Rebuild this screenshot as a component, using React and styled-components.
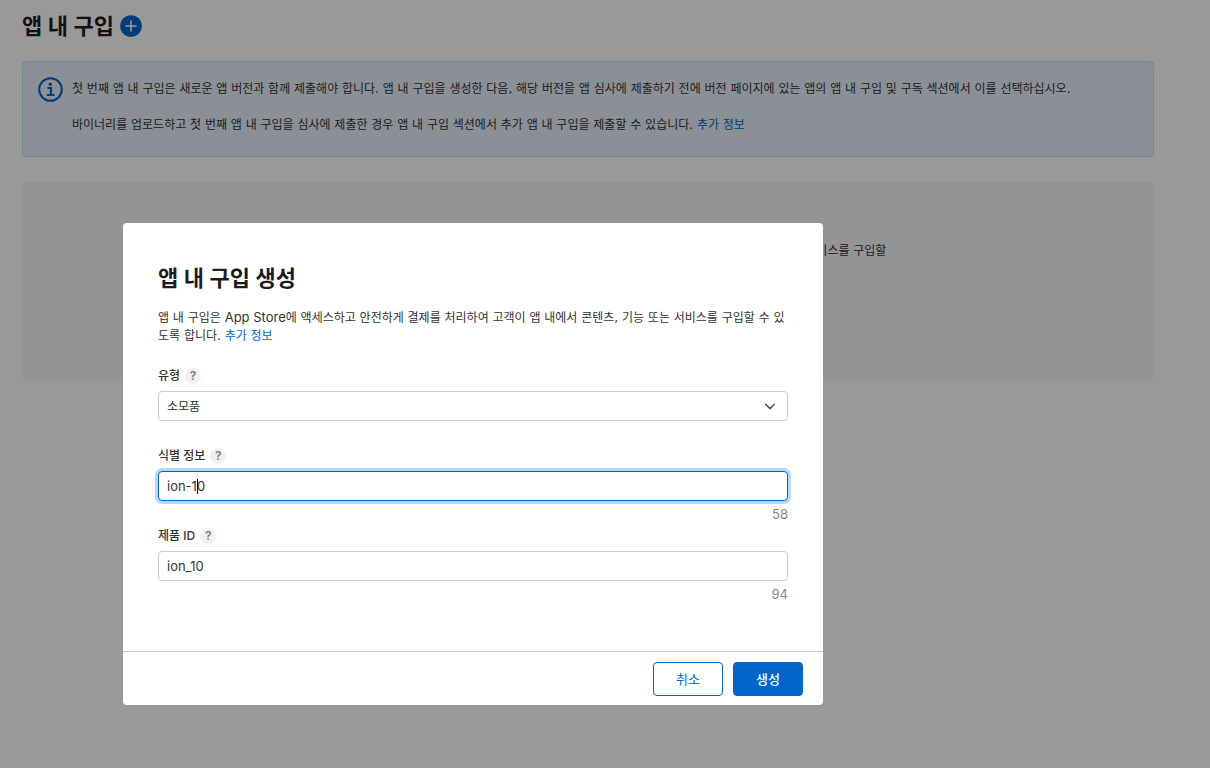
import { useState } from 'react';
import styled, { createGlobalStyle, css } from 'styled-components';

const latinFont = "Inter, 'Noto Sans CJK KR', sans-serif";
const koreanFont = "'DejaVu Sans', 'Noto Sans CJK KR', sans-serif";

const GlobalStyle = createGlobalStyle`
  * {
    box-sizing: border-box;
  }

  body {
    margin: 0;
    background: #fff;
    color: #333;
    font-family: ${latinFont};
    font-size: 12px;
    line-height: 18px;
  }

  h1, h2, p {
    margin: 0;
  }

  p {
    font-family: ${koreanFont};
  }

  button, input, select {
    font-family: inherit;
  }
`;

const Page = styled.main`
  min-height: 100vh;
  padding: 10px 56px 24px 22px;
`;

const PageHeader = styled.header`
  display: flex;
  align-items: center;
  gap: 6px;
  height: 32px;
  margin-bottom: 19px;
`;

const PageTitle = styled.h1`
  color: #1d1d1f;
  font-size: 22px;
  font-weight: 600;
  line-height: 32px;
`;

const AddButton = styled.button`
  display: flex;
  padding: 0;
  border: 0;
  background: none;
`;

const Notice = styled.section`
  display: flex;
  gap: 9px;
  padding: 18px 15px 22px;
  border: 1px solid #c2dfff;
  border-radius: 4px;
  background: #e8f0fb;

  svg {
    flex: none;
    margin-top: -3px;
  }
`;

const NoticeText = styled.div`
  display: grid;
  gap: 18px;
`;

const Link = styled.a`
  color: #0066cc;
  text-decoration: none;
`;

const Latin = styled.span`
  font-family: ${latinFont};
  font-size: 13px;
  line-height: 1;
`;

const EmptyPanel = styled.section`
  min-height: 199px;
  margin-top: 25px;
  padding: 60px 24px 24px;
  border-radius: 4px;
  background: #f7f7f7;
  text-align: center;
  word-break: keep-all;

  p {
    max-width: 604px;
    margin: 0 auto;
  }
`;

const Overlay = styled.div`
  position: fixed;
  inset: 0;
  padding: 223px 24px 24px 123px;
  background: rgba(0, 0, 0, 0.4);
  overflow: auto;
`;

const Modal = styled.form`
  max-width: 700px;
  border-radius: 4px;
  background: #fff;
`;

const ModalBody = styled.div`
  padding: 39px 35px 46px;
`;

const ModalTitle = styled.h2`
  color: #1d1d1f;
  font-size: 22px;
  font-weight: 600;
  line-height: 32px;
`;

const ModalText = styled.p`
  margin: 15px 0 21px;
  word-break: break-all;
`;

const FieldGroup = styled.div`
  min-height: 80px;

  &:last-child {
    min-height: 79px;
  }
`;

const LabelRow = styled.div`
  display: flex;
  align-items: center;
  gap: 5px;
  height: 20px;
  margin-bottom: 5px;
`;

const Label = styled.label`
  font-weight: 500;
`;

const HelpButton = styled.button`
  width: 16px;
  height: 16px;
  padding: 0;
  border: 0;
  border-radius: 50%;
  background: #f0f0f0;
  color: #777;
  font-size: 12px;
  font-weight: 600;
  line-height: 16px;
`;

const Control = styled.div`
  position: relative;

  svg {
    position: absolute;
    top: 12px;
    right: 12px;
    pointer-events: none;
  }
`;

const controlStyle = css`
  display: block;
  width: 100%;
  height: 30px;
  padding: 0 8px;
  border: 1px solid ${(props) => (props.$active ? '#0066cc' : '#ccc')};
  border-radius: 4px;
  outline: 0;
  background: #fff;
  box-shadow: ${(props) => (props.$active ? '0 0 0 3px #b9d9fc' : 'none')};
  color: #333;
`;

const Select = styled.select`
  ${controlStyle}
  appearance: none;
  font-size: 12px;
`;

const Input = styled.input`
  ${controlStyle}
  font-size: 13px;
`;

const Caret = styled.span`
  position: absolute;
  top: 8px;
  left: 39px;
  width: 1px;
  height: 15px;
  background: #000;
`;

const Counter = styled.div`
  padding-top: 3px;
  color: #888;
  font-size: 13px;
  line-height: 20px;
  text-align: right;
`;

const ModalFooter = styled.footer`
  display: flex;
  justify-content: flex-end;
  gap: 10px;
  padding: 10px 20px 9px;
  border-top: 1px solid #ccc;
`;

const Button = styled.button`
  min-width: 70px;
  height: 34px;
  padding: 0 12px 2px;
  border: 1px solid #0066cc;
  border-radius: 4px;
  background: ${(props) => (props.$primary ? '#0066cc' : '#fff')};
  color: ${(props) => (props.$primary ? '#fff' : '#0066cc')};
  font-size: 13px;
  font-weight: ${(props) => (props.$primary ? 500 : 400)};
`;

const PlusIcon = () => (
  <svg width="22" height="22" viewBox="0 0 22 22" aria-hidden="true">
    <circle cx="11" cy="11" r="10.8" fill="#0066cc" />
    <path d="M11 6v10M6 11h10" stroke="#fff" strokeWidth="1.6" strokeLinecap="round" />
  </svg>
);

const InfoIcon = () => (
  <svg width="25" height="25" viewBox="0 0 25 25" fill="none" aria-hidden="true">
    <circle cx="12.5" cy="12.5" r="11.3" stroke="#0066cc" strokeWidth="2" />
    <circle cx="12.3" cy="7.2" r="1.7" fill="#0066cc" />
    <path d="M10.2 11h2.8v7M9.8 18h6" stroke="#0066cc" strokeWidth="2.2" strokeLinecap="round" />
  </svg>
);

const ChevronIcon = () => (
  <svg width="12" height="8" viewBox="0 0 12 8" fill="none" aria-hidden="true">
    <path d="M1.6 1.2L6 5.6l4.4-4.4" stroke="#555" strokeWidth="1.5" strokeLinecap="round" />
  </svg>
);

const Field = (props) => {
  const { id, label, count, children } = props;

  return (
    <FieldGroup>
      <LabelRow>
        <Label htmlFor={id}>{label}</Label>
        <HelpButton type="button">?</HelpButton>
      </LabelRow>
      <Control>{children}</Control>
      {count && <Counter>{count}</Counter>}
    </FieldGroup>
  );
};

const App = () => {
  const [name, setName] = useState('ion-10');
  const [productId, setProductId] = useState('ion_10');

  return (
    <>
      <GlobalStyle />
      <Page>
        <PageHeader>
          <PageTitle>앱 내 구입</PageTitle>
          <AddButton type="button">
            <PlusIcon />
          </AddButton>
        </PageHeader>
        <Notice>
          <InfoIcon />
          <NoticeText>
            <p>
              첫 번째 앱 내 구입은 새로운 앱 버전과 함께 제출해야 합니다. 앱 내 구입을 생성한 다음, 해당 버전을 앱
              심사에 제출하기 전에 버전 페이지에 있는 앱의 앱 내 구입 및 구독 섹션에서 이를 선택하십시오.
            </p>
            <p>
              바이너리를 업로드하고 첫 번째 앱 내 구입을 심사에 제출한 경우 앱 내 구입 섹션에서 추가 앱 내 구입을
              제출할 수 있습니다. <Link href="#">추가 정보</Link>
            </p>
          </NoticeText>
        </Notice>
        <EmptyPanel>
          <p>
            앱 내 구입은 <Latin>App Store</Latin>에 액세스하고 안전하게 결제를 처리하여 고객이 앱 내에서 콘텐츠, 기능
            또는 서비스를 구입할 수 있도록 합니다.
          </p>
        </EmptyPanel>
      </Page>
      <Overlay>
        <Modal role="dialog" aria-labelledby="modal-title" onSubmit={(e) => e.preventDefault()}>
          <ModalBody>
            <ModalTitle id="modal-title">앱 내 구입 생성</ModalTitle>
            <ModalText>
              앱 내 구입은 <Latin>App Store</Latin>에 액세스하고 안전하게 결제를 처리하여 고객이 앱 내에서 콘텐츠,
              기능 또는 서비스를 구입할 수 있도록 합니다. <Link href="#">추가 정보</Link>
            </ModalText>
            <Field id="type" label="유형">
              <Select id="type">
                <option>소모품</option>
              </Select>
              <ChevronIcon />
            </Field>
            <Field id="name" label="식별 정보" count="58">
              <Input id="name" $active value={name} onChange={(e) => setName(e.target.value)} />
              <Caret />
            </Field>
            <Field id="product-id" label="제품 ID" count="94">
              <Input id="product-id" value={productId} onChange={(e) => setProductId(e.target.value)} />
            </Field>
          </ModalBody>
          <ModalFooter>
            <Button type="button">취소</Button>
            <Button type="submit" $primary>
              생성
            </Button>
          </ModalFooter>
        </Modal>
      </Overlay>
    </>
  );
};

export default App;
